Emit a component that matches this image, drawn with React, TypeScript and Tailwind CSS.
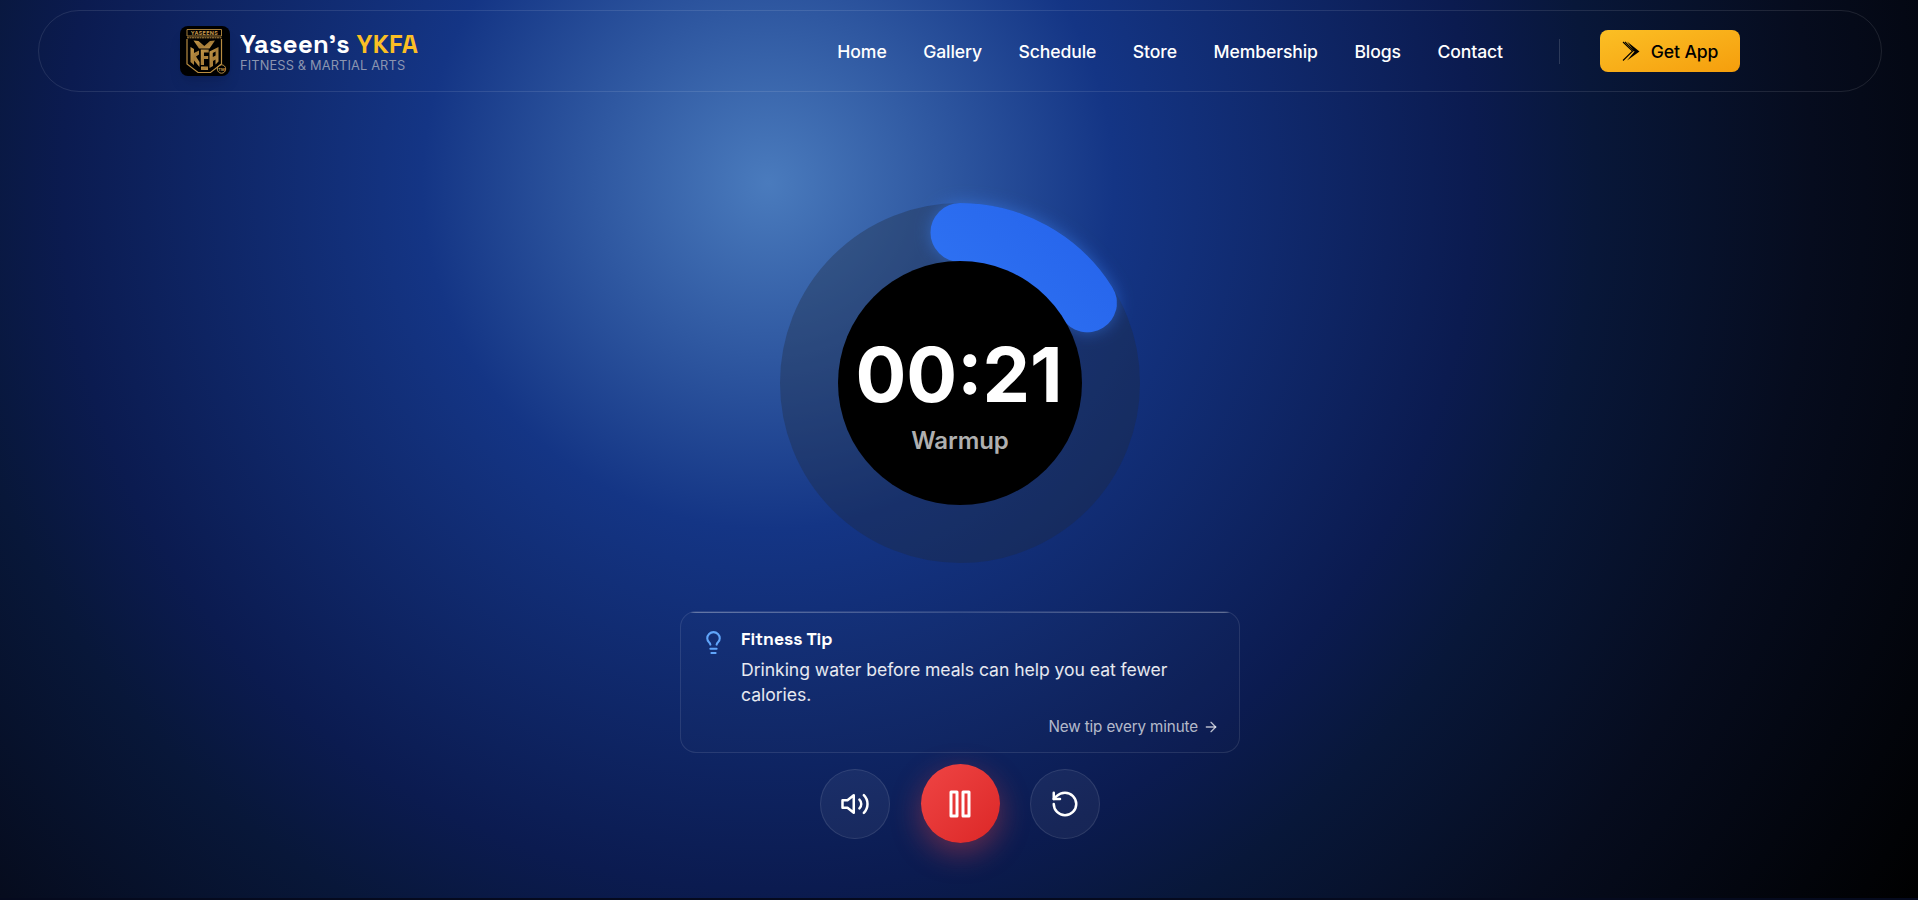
import { ArrowRight, Lightbulb, RotateCcw } from "lucide-react";

const links = ["Home", "Gallery", "Schedule", "Store", "Membership", "Blogs", "Contact"];

function Crest() {
  return (
    <svg viewBox="0 0 50 50" className="h-[50px] w-[50px] rounded-lg bg-black shadow-lg" fill="none">
      <defs>
        <linearGradient id="gold" x1="0" y1="0" x2="1" y2="1">
          <stop offset="0" stopColor="#c79a4a" />
          <stop offset="0.5" stopColor="#a67c38" />
          <stop offset="1" stopColor="#c2954a" />
        </linearGradient>
      </defs>
      <g stroke="#b98d42">
        <path d="M7 3.500h34.500v6.500H7z" strokeWidth="0.900" />
        <path d="M7 11.800h34.500" strokeWidth="1" strokeDasharray="2 .5" />
        <path d="M7 13v25l11 8.500h12.500L41.500 38V13" strokeWidth="1.200" />
      </g>
      <text x="24.200" y="8.900" textAnchor="middle" fontSize="5.400" fontWeight="700" textLength="27" fill="#c79a4a" fontFamily="Inter, sans-serif">
        YASEENS
      </text>
      <g fill="url(#gold)">
        <path d="M13.500 14.500l5 .5 5.800 5L30 15l5-.5-5.500 8h-10.500z" />
        <path d="M10.500 21l3.500 2v4l5-2.500v4l-3 2 3.500 5.500V41l-5.500-6.500v4.500l-3.500-3z" />
        <path d="M38.500 21v14.500L35.500 38.500v-5l-2.500 1.500v5L29.500 42V25.500zM32.800 27v4l2.800-1.500v-4z" fillRule="evenodd" />
        <path d="M20.800 23.500h7.900v3h-4.700v3.500h4.200v3h-4.200V39h-3.200z" />
        <path d="M21 40.500h7v3.500h-7z" />
      </g>
      <circle cx="41.500" cy="43" r="4.200" stroke="#c79a4a" strokeWidth="0.900" />
      <text x="41.500" y="44.500" textAnchor="middle" fontSize="4" fontWeight="700" fill="#c79a4a" fontFamily="Inter, sans-serif">
        TM
      </text>
    </svg>
  );
}

function Header() {
  return (
    <header className="mx-[38px] flex h-[82px] items-center justify-between rounded-full border border-white/10 px-[141px]">
      <a className="flex items-center gap-[10px]">
        <Crest />
        <span className="flex flex-col pt-0.5">
          <span className="font-['Space_Grotesk','Inter',sans-serif] text-[25.600px] leading-7 font-bold tracking-[0.3px] whitespace-nowrap text-white">
            Yaseen’s <span className="text-[#fbbf24]">YKFA</span>
          </span>
          <span className="text-[12.800px] leading-4 tracking-[0.150px] whitespace-nowrap text-[#8b95b0]">FITNESS &amp; MARTIAL ARTS</span>
        </span>
      </a>
      <div className="flex items-center">
        <nav className="flex items-center gap-[36.500px] pt-0.5 text-[17.600px] font-medium tracking-[-0.1px] text-white">
          {links.map((l) => (
            <a key={l}>{l}</a>
          ))}
        </nav>
        <span className="mr-10 ml-14 h-[25px] w-px bg-white/15" />
        <button className="flex h-[42px] w-[140px] items-center justify-center gap-[11px] rounded-lg bg-linear-to-br from-[#fbbf24] to-[#f59e0b] text-[17.600px] font-medium tracking-[-0.1px] text-black">
          <svg viewBox="0 0 18 20" className="h-5 w-[18px]">
            <path d="M5 .5l12.500 10L5 19.500l7.500-9z" fill="#000" />
            <path d="M1 1l9.500 9.200L1 19.500M3 .8l9.200 9.400" fill="none" stroke="#000" strokeWidth="1.100" />
          </svg>
          <span className="pt-0.5">Get App</span>
        </button>
      </div>
    </header>
  );
}

function Dial() {
  const c = 2 * Math.PI * 150.5;
  return (
    <div className="grid h-[360px] w-[360px] place-items-center">
      <svg viewBox="0 0 360 360" className="col-start-1 row-start-1 h-full w-full overflow-visible">
        <defs>
          <linearGradient id="arc" x1="0" y1="0" x2="1" y2="1">
            <stop offset="0" stopColor="#3f8cff" />
            <stop offset="1" stopColor="#2563eb" />
          </linearGradient>
        </defs>
        <circle cx="180" cy="180" r="150.500" fill="none" stroke="#1f2937" strokeOpacity="0.34" strokeWidth="59" />
        <circle
          cx="180"
          cy="180"
          r="150.500"
          fill="none"
          stroke="url(#arc)"
          strokeWidth="59"
          strokeLinecap="round"
          strokeDasharray={`${c * 0.1605} ${c}`}
          transform="rotate(-90 180 180)"
          className="drop-shadow-[0_0_8px_rgba(59,130,246,0.5)]"
        />
        <circle cx="180" cy="180" r="122" fill="#000" />
      </svg>
      <div className="col-start-1 row-start-1 flex flex-col items-center pt-[25px]">
        <div className="pt-px pr-[2px] text-[75.500px] leading-[77px] font-bold text-white">00:21</div>
        <div className="mt-3 text-2xl leading-8 font-semibold tracking-[-0.1px] text-[#afafaf]">Warmup</div>
      </div>
    </div>
  );
}

function Tip() {
  return (
    <section className="relative flex h-[142px] w-[560px] gap-3 overflow-hidden rounded-2xl border border-white/10 bg-white/[0.01] py-4 pr-5 pl-5">
      <span className="absolute inset-x-0 top-0 h-px bg-linear-to-r from-white/35 via-white/15 to-white/35" />
      <Lightbulb className="mt-0.5 h-[25px] w-[25px] shrink-0 text-[#60a5fa]" strokeWidth={2} />
      <div className="flex flex-1 flex-col pl-[3px]">
        <h2 className="font-['Space_Grotesk','Inter',sans-serif] text-[17.600px] leading-[22px] font-semibold text-white">Fitness Tip</h2>
        <p className="mt-[7px] text-[17.600px] leading-[25px] tracking-[-0.05px] text-white/90">Drinking water before meals can help you eat fewer calories.</p>
        <div className="mt-2.5 flex items-center justify-end gap-[5px] text-[15.200px] leading-5 tracking-[-0.12px] text-white/70">
          New tip every minute <ArrowRight className="h-4 w-4" />
        </div>
      </div>
    </section>
  );
}

export default function App() {
  return (
    <div className="w-full overflow-hidden">
      <div className="flex h-[900px] w-[1920px] flex-col items-center overflow-hidden border-b-2 border-[#050a1e] bg-[radial-gradient(circle_at_40%_20.4%,#4a7bbd_0%,#143585_25.5%,#0b1b50_52%,#081739_61%,#060c1e_77%,#000_100%)] pt-[10px] font-['Inter',sans-serif]">
        <div className="w-full">
          <Header />
        </div>
        <main className="flex flex-col items-center pt-[111px]">
          <Dial />
          <div className="mt-12">
            <Tip />
          </div>
          <div className="mt-[11px] flex items-end gap-[30.500px]">
            <button className="mb-1 grid h-[70px] w-[70px] place-items-center rounded-full border border-white/10 bg-white/5 text-white">
              <svg viewBox="0 0 24 24" className="h-[30px] w-[30px]" fill="none" stroke="currentColor" strokeWidth="2" strokeLinecap="round" strokeLinejoin="round">
                <path d="M11 5L6 9H2v6h4l5 4zM15.540 8.460a5 5 0 0 1 0 7.070M19.070 4.930a10 10 0 0 1 0 14.140" />
              </svg>
            </button>
            <button className="grid h-[79px] w-[79px] place-items-center rounded-full bg-linear-to-br from-[#ef4444] to-[#dc2626] text-white shadow-[0_10px_30px_rgba(239,68,68,0.4)]">
              <svg viewBox="0 0 24 24" className="h-9 w-9" fill="none" stroke="currentColor" strokeWidth="2" strokeLinejoin="round">
                <path d="M6 4h4v16H6zM14 4h4v16h-4z" />
              </svg>
            </button>
            <button className="mb-1 grid h-[70px] w-[70px] place-items-center rounded-full border border-white/10 bg-white/5 text-white">
              <RotateCcw className="h-[30px] w-[30px]" />
            </button>
          </div>
        </main>
      </div>
    </div>
  );
}
